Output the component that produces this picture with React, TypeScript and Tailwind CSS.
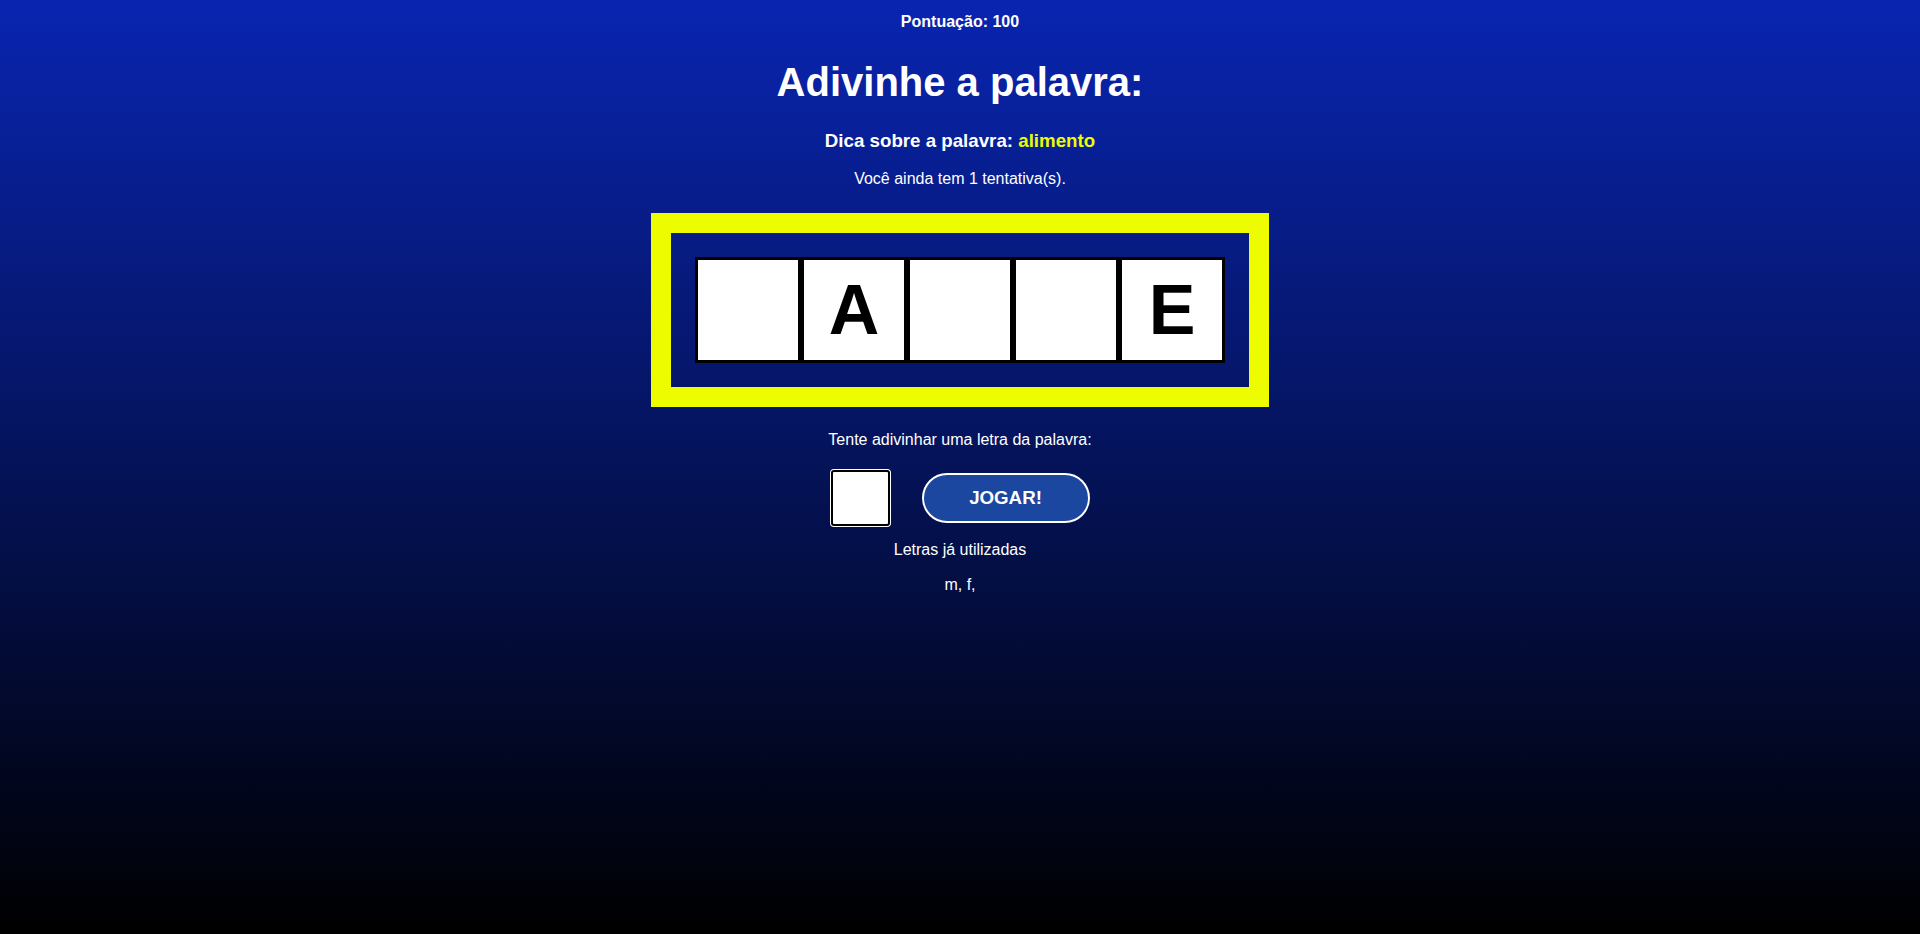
import { useState } from 'react';

// jogo da forca simplificado: palavra de 5 letras, dica e letras já usadas
const PALAVRA = ['', 'A', '', '', 'E'];

const App = () => {
  const [letra, setLetra] = useState('');
  const usadas = ['m', 'f'];

  return (
    <div className="min-h-screen bg-[linear-gradient(#0925b1,#000)] flex flex-col items-center text-white font-['Liberation_Sans',Arial,sans-serif]">
      <h4 className="pt-[13px] text-[16px] leading-[18px] font-bold">Pontuação: 100</h4>

      <h1 className="mt-[28px] text-[40px] leading-[46px] font-bold">Adivinhe a palavra:</h1>

      <h3 className="mt-[25px] text-[18.72px] leading-[22px] font-bold">
        Dica sobre a palavra: <span className="text-[#eefc00]">alimento</span>
      </h3>

      <p className="mt-[18px] text-[16px] leading-[18px]">Você ainda tem 1 tentativa(s).</p>

      <div className="mt-[25px] border-[20px] border-[#eefc00] p-[24px]">
        <div className="flex">
          {PALAVRA.map((l, i) => (
            <div
              key={i}
              className="w-[106px] h-[106px] border-[3px] border-black bg-white flex items-center justify-center text-[70px] leading-none font-bold text-black"
            >
              {l}
            </div>
          ))}
        </div>
      </div>

      <p className="mt-[24px] text-[16px] leading-[18px]">Tente adivinhar uma letra da palavra:</p>

      <div className="mt-[21px] flex items-center gap-[32px]">
        <input
          value={letra}
          maxLength={1}
          onChange={(e) => setLetra(e.target.value)}
          className="w-[59px] h-[56px] rounded-[3px] border-2 border-black bg-white ring-1 ring-white text-black text-center text-[24px] outline-none"
        />
        <button className="w-[168px] h-[50px] rounded-full border-2 border-white bg-[#1b47a0] text-[18.72px] font-bold text-white">
          JOGAR!
        </button>
      </div>

      <p className="mt-[15px] text-[16px] leading-[18px]">Letras já utilizadas</p>
      <p className="mt-[17px] text-[16px] leading-[18px]">
        {usadas.map((u) => `${u}, `).join('')}
      </p>
    </div>
  );
};

export default App;
